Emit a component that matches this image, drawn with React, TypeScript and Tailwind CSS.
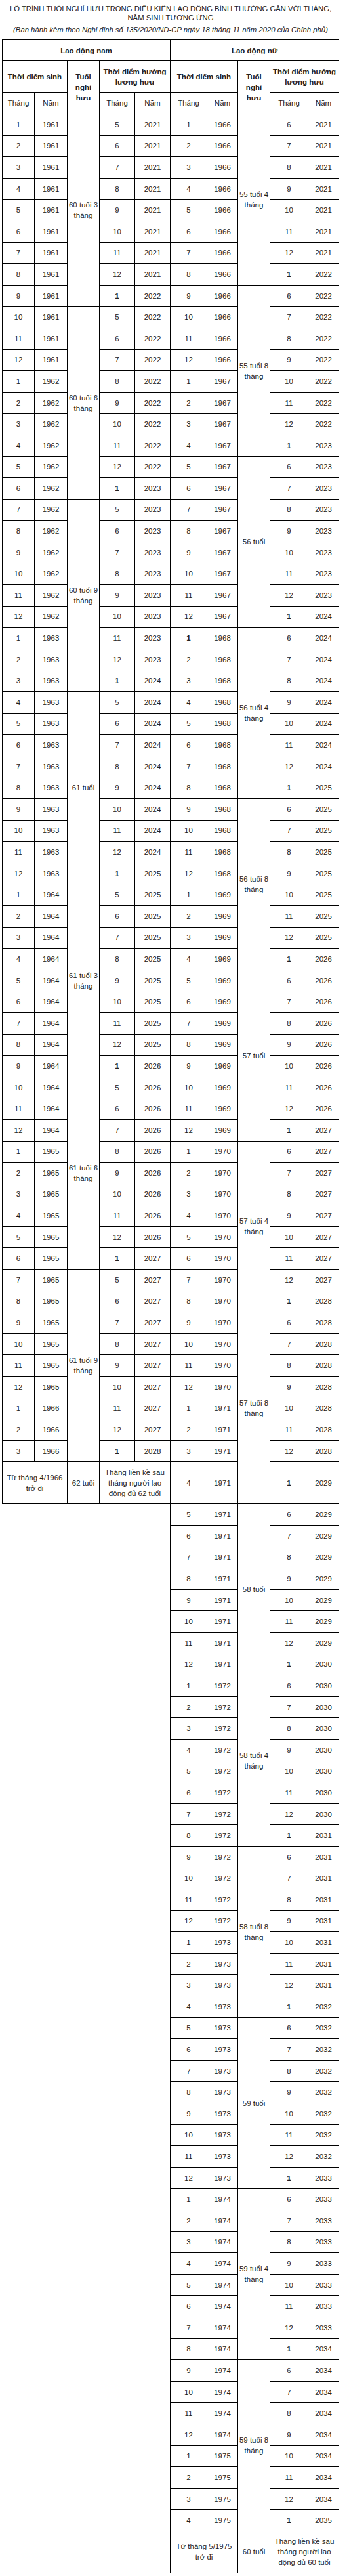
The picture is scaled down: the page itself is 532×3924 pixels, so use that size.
import React from 'react';

type Row = { m: number; y: number; pm: number; py: number };
type Group = { label: string; rows: Row[] };

const ageLabel = (a: number) => {
  const y = Math.floor(a / 12);
  const mo = a % 12;
  return mo ? `${y} tuổi ${mo} tháng` : `${y} tuổi`;
};

// birth month/year -> pension month/year (month after reaching retirement age)
const buildGroups = (startYear: number, count: number, per: number, baseAge: number, step: number): Group[] => {
  const groups: Group[] = [];
  for (let g = 0; g < count; g++) {
    const age = baseAge + step * (g + 1);
    const rows: Row[] = [];
    for (let k = 0; k < per; k++) {
      const idx = startYear * 12 + g * per + k;
      const p = idx + age + 1;
      rows.push({ m: (idx % 12) + 1, y: Math.floor(idx / 12), pm: (p % 12) + 1, py: Math.floor(p / 12) });
    }
    groups.push({ label: ageLabel(age), rows });
  }
  return groups;
};

const male = buildGroups(1961, 7, 9, 720, 3);
const female = buildGroups(1966, 14, 8, 660, 4);
const maleRows = male.flatMap((g) => g.rows);
const femaleRows = female.flatMap((g) => g.rows);

const td = 'border border-black text-center align-middle px-[2px]';
const th = 'border border-black text-center align-middle px-[2px] font-bold';

const MaleCells = ({ i }: { i: number }) => {
  if (i < 63) {
    const r = maleRows[i];
    return (
      <>
        <td className={td}>{r.m}</td>
        <td className={td}>{r.y}</td>
        {i % 9 === 0 && (
          <td rowSpan={9} className="border border-black text-center align-middle px-0">
            {male[i / 9].label}
          </td>
        )}
        <td className={`${td} ${r.pm === 1 ? 'font-bold' : ''}`}>{r.pm}</td>
        <td className={td}>{r.py}</td>
      </>
    );
  }
  if (i === 63) {
    return (
      <>
        <td colSpan={2} className={`${td} px-[4px]`}>Từ tháng 4/1966 trở đi</td>
        <td className={td}>62 tuổi</td>
        <td colSpan={2} className={td}>Tháng liền kề sau tháng người lao động đủ 62 tuổi</td>
      </>
    );
  }
  if (i === 64) return <td colSpan={5} rowSpan={49} className="border-0" />;
  return null;
};

const FemaleCells = ({ i }: { i: number }) => {
  if (i < 112) {
    const r = femaleRows[i];
    const boldBirth = r.m === 1 && r.y === 1968;
    return (
      <>
        <td className={`${td} ${boldBirth ? 'font-bold' : ''}`}>{r.m}</td>
        <td className={td}>{r.y}</td>
        {i % 8 === 0 && (
          <td rowSpan={8} className="border border-black text-center align-middle px-0">
            {female[i / 8].label}
          </td>
        )}
        <td className={`${td} ${r.pm === 1 ? 'font-bold' : ''}`}>{r.pm}</td>
        <td className={td}>{r.py}</td>
      </>
    );
  }
  return (
    <>
      <td colSpan={2} className={`${td} px-[4px]`}>Từ tháng 5/1975 trở đi</td>
      <td className={td}>60 tuổi</td>
      <td colSpan={2} className={td}>Tháng liền kề sau tháng người lao động đủ 60 tuổi</td>
    </>
  );
};

const HeadGroup = () => (
  <>
    <th colSpan={2} className={th}>Thời điểm sinh</th>
    <th rowSpan={2} className={`${th} px-[6px]`}>Tuổi nghỉ hưu</th>
    <th colSpan={2} className={th}>Thời điểm hưởng lương hưu</th>
  </>
);

export default function App() {
  const widths = [49, 50, 49, 54, 54, 56, 47, 49, 58, 47];

  return (
    <div className="w-[532px] bg-white text-[#222] font-['Liberation_Sans',Arial,sans-serif]">
      <div className="w-[520px] pt-[6px] text-center text-[11.3px] leading-[14px]">
        <p className="whitespace-nowrap">
          LỘ TRÌNH TUỔI NGHỈ HƯU TRONG ĐIỀU KIỆN LAO ĐỘNG BÌNH THƯỜNG GẮN VỚI THÁNG,
          <br />
          NĂM SINH TƯƠNG ỨNG
        </p>
        <p className="mt-[4px] whitespace-nowrap italic">
          (Ban hành kèm theo Nghị định số 135/2020/NĐ-CP ngày 18 tháng 11 năm 2020 của Chính phủ)
        </p>
      </div>

      <table className="ml-[3px] mt-[8px] w-[514px] table-fixed border-collapse text-[11.5px] leading-[16px]">
        <colgroup>
          {widths.map((w, k) => (
            <col key={k} style={{ width: w }} />
          ))}
        </colgroup>
        <thead>
          <tr className="h-[32px]">
            <th colSpan={5} className={th}>Lao động nam</th>
            <th colSpan={5} className={th}>Lao động nữ</th>
          </tr>
          <tr className="h-[48px]">
            <HeadGroup />
            <HeadGroup />
          </tr>
          <tr className="h-[33px]">
            <td className={td}>Tháng</td>
            <td className={td}>Năm</td>
            <td className={td}>Tháng</td>
            <td className={td}>Năm</td>
            <td className={td}>Tháng</td>
            <td className={td}>Năm</td>
            <td className={td}>Tháng</td>
            <td className={td}>Năm</td>
          </tr>
        </thead>
        <tbody>
          {Array.from({ length: 113 }).map((_, i) => (
            <tr key={i} className={i === 63 || i === 112 ? 'h-[64px]' : 'h-[32.6px]'}>
              <MaleCells i={i} />
              <FemaleCells i={i} />
            </tr>
          ))}
        </tbody>
      </table>
    </div>
  );
}
